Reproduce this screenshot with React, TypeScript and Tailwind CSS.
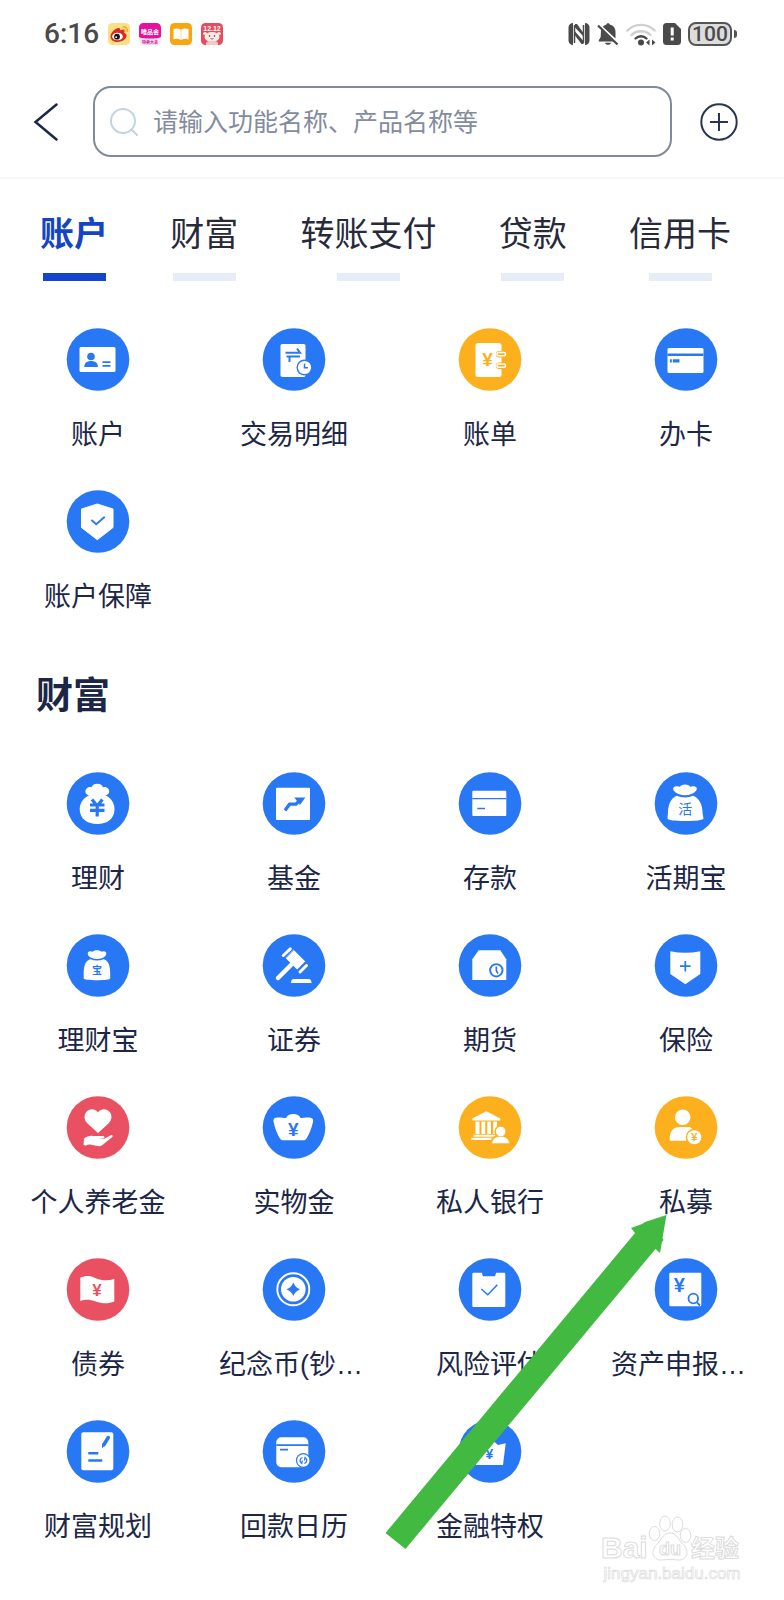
import { useState } from "react";
import type { ReactNode } from "react";
import clsx from "clsx";

const BLUE = "#2878f5";
const ORANGE = "#fdb01e";
const RED = "#e95163";

interface Entry {
  label: string;
  color: string;
  glyph: ReactNode;
}

interface YenProps {
  x: number;
  y: number;
  size: number;
  color: string;
}

function Yen({ x, y, size, color }: YenProps) {
  return (
    <text x={x} y={y} fontSize={size} fontWeight="700" textAnchor="middle" fill={color}>
      ¥
    </text>
  );
}

const accountEntries: Entry[] = [
  {
    label: "账户",
    color: BLUE,
    glyph: (
      <>
        <rect x="13.5" y="19" width="36" height="25" rx="1.5" />
        <g fill={BLUE}>
          <circle cx="25" cy="28.5" r="3.8" />
          <path d="M18.3 39c0-4 2.5-6 6.8-6s6.800 2 6.8 6z" />
          <path d="M36.5 33.2h8v1.700h-8zM36.5 37h8v1.800h-8z" />
        </g>
      </>
    ),
  },
  {
    label: "交易明细",
    color: BLUE,
    glyph: (
      <>
        <rect x="18.5" y="16" width="25" height="33" rx="1.8" />
        <path d="M23.5 24.7H38L35 20.500M38 28.500H24.500M27.500 28.500V34" fill="none" stroke={BLUE} strokeWidth="2" />
        <circle cx="42.5" cy="39.5" r="8" fill={BLUE} />
        <circle cx="42.5" cy="39.5" r="6.6" />
        <path d="M42.5 35.5v4.200h3.500" fill="none" stroke={BLUE} strokeWidth="1.5" />
      </>
    ),
  },
  {
    label: "账单",
    color: ORANGE,
    glyph: (
      <>
        <rect x="17.5" y="15" width="26" height="34" rx="2.5" />
        <Yen x={29.5} y={37.5} size={19} color={ORANGE} />
        <rect x="38" y="23" width="11" height="6.5" rx="3" fill={ORANGE} />
        <rect x="39" y="24.5" width="8.5" height="3.2" rx="1.5" fill={ORANGE} stroke="#fff" strokeWidth="1.5" />
        <rect x="38" y="34.5" width="11" height="6.5" rx="3" fill={ORANGE} />
        <rect x="39" y="36" width="8.5" height="3.2" rx="1.5" fill={ORANGE} stroke="#fff" strokeWidth="1.5" />
      </>
    ),
  },
  {
    label: "办卡",
    color: BLUE,
    glyph: (
      <>
        <rect x="13.5" y="20" width="36" height="25" rx="1.5" />
        <path d="M13.5 25.500h36v2.500h-36zM16 31.200h1.800v3.200H16zM18.800 31.200h6.700v3.200h-6.700z" fill={BLUE} />
      </>
    ),
  },
  {
    label: "账户保障",
    color: BLUE,
    glyph: (
      <>
        <path d="M31.300 14 47 19v18.500L31.300 49.700 15.500 37.500V19z" stroke="#fff" strokeLinejoin="round" />
        <path d="m26 30.500 4.200 3.800 8-7" fill="none" stroke={BLUE} strokeWidth="1.9" strokeLinecap="round" />
      </>
    ),
  },
];

const wealthEntries: Entry[] = [
  {
    label: "理财",
    color: BLUE,
    glyph: (
      <>
        <path d="M24 23.500c-4 0-6-4-3.500-7 1.400-1.700 3.400-2 5-1.200 1-2.500 3-3.600 5.800-3.600s4.800 1.100 5.800 3.600c1.600-.8 3.600-.5 5 1.200 2.500 3 .5 7-3.500 7z" />
        <path d="M25 22.500h12.500c6.500 2.500 11 7.500 11 14.500 0 10-7.500 15-17.300 15S13.700 47 13.700 37c0-7 4.800-12 11.300-14.500z" />
        <path d="M26 27.500 31.200 34l5.200-6.500M24 33h14.500M24 38.300h14.500M31.200 33v11.500" fill="none" stroke={BLUE} strokeWidth="3.2" />
      </>
    ),
  },
  {
    label: "基金",
    color: BLUE,
    glyph: (
      <>
        <rect x="14" y="15.7" width="34" height="32.3" rx="1" />
        <path d="m23 38.500 4.500-6.300h6.500l4-4" fill="none" stroke={BLUE} strokeWidth="3.2" />
        <path d="M32.300 25.500h11L38 33z" fill={BLUE} />
      </>
    ),
  },
  {
    label: "存款",
    color: BLUE,
    glyph: (
      <>
        <rect x="14.3" y="18.7" width="34" height="25.3" rx="1" />
        <path d="M14.300 26h34v1.300h-34zM19.300 35.800H27v1.500h-7.700z" fill={BLUE} />
      </>
    ),
  },
  {
    label: "活期宝",
    color: BLUE,
    glyph: (
      <>
        <path d="M24.500 22c-4.500-2-6-4.800-5-6.500 1.400-1.600 4-1.700 6.300-.8 1.200-1.400 3-2.200 5.200-2.200s4 .8 5.200 2.200c2.300-.9 4.900-.8 6.300.8 1 1.700-.5 4.500-5 6.500-4 1.600-9 1.600-13 0z" />
        <path d="M23 23.800c4.500 2.200 11.500 2.200 16 0 6.500 2.500 9.500 9 9.700 18.200l.8 4.500c0 1.700-8 2.500-18.300 2.500s-17.700-.8-17.700-2.500l.4-4.500C14 32.800 16.500 26.300 23 23.800z" />
        <text x="31.2" y="42" fontSize="14" textAnchor="middle" fill={BLUE}>活</text>
      </>
    ),
  },
  {
    label: "理财宝",
    color: BLUE,
    glyph: (
      <>
        <path d="M25.500 24c-3.300-1.500-4.500-4-3.500-5.800 1.200-1.300 2.800-1.200 4.500-.5 1-1 2.500-1.500 4.500-1.500s3.500.5 4.500 1.500c1.700-.7 3.300-.8 4.500.5 1 1.800-.2 4.300-3.500 5.800-3.500 1.300-7.500 1.300-11 0z" />
        <path d="M24.500 25.300c4 1.700 9 1.700 13 0 4.500 1 6.700 5.700 6.700 14.200v5c0 1-6 1.700-13.200 1.700s-13.300-.7-13.300-1.700v-5c0-8.500 2.300-13.200 6.800-14.200z" />
        <text x="31" y="40" fontSize="10" fontWeight="700" textAnchor="middle" fill={BLUE}>宝</text>
      </>
    ),
  },
  {
    label: "证券",
    color: BLUE,
    glyph: (
      <>
        <path d="m31.300 15.500 12 12-8 8.300-12-12z" />
        <path d="m21.300 21.500 7-6.700M38 38l6.500-6.500" stroke="#fff" strokeWidth="3" strokeLinecap="round" />
        <path d="m23 24.500 8.500-8.500M35 36.500l8.500-8.500" stroke={BLUE} strokeWidth="1" />
        <path d="M16 44 29 31" stroke="#fff" strokeWidth="4.5" strokeLinecap="round" />
        <path d="M29 49c0-2.700 1-4 3-4h14.500c2 0 3 1.300 3 4z" />
      </>
    ),
  },
  {
    label: "期货",
    color: BLUE,
    glyph: (
      <>
        <path d="M20.700 16.300h21.600l6 9V46h-34V25.300z" />
        <circle cx="38.3" cy="36.3" r="6.2" fill="none" stroke={BLUE} strokeWidth="1.9" />
        <path d="M38.300 32.500v4l1.600 3" fill="none" stroke={BLUE} strokeWidth="1.6" />
      </>
    ),
  },
  {
    label: "保险",
    color: BLUE,
    glyph: (
      <>
        <path d="M16.300 17.300q15 3 30 0V40l-15 10.300-15-10.300z" />
        <path d="M31.300 27v10.500M26 32.200h10.600" stroke={BLUE} strokeWidth="1.7" />
      </>
    ),
  },
  {
    label: "个人养老金",
    color: RED,
    glyph: (
      <>
        <path d="M32 37 21.500 27.500c-3.700-3.500-3.700-8.500-1.200-11.500 3.200-3.700 8.700-3.500 11.700.3 3-3.800 8.500-4 11.700-.3 2.500 3 2.500 8-1.200 11.500z" />
        <path d="M18 42.500c3-2.200 6-3 9-2.500h10.500c1.500.3 1.300 2-.2 2.200l-5 .3 6 .2 6.500-3.500c1.500-.5 2.500.5 1.500 1.800L38 47.700c-1.500 1.500-3 2.300-5 2.600l-8-1.600c-2-.3-3.500 0-5.500 1l-2-1z" />
      </>
    ),
  },
  {
    label: "实物金",
    color: BLUE,
    glyph: (
      <>
        <path d="M24 22c1-2.500 4-4 7.300-4s6.300 1.500 7.300 4c3-.3 7-1 10.200-.3 2 .5 2.700 2.300 2.200 4.300-1.500 6.500-3.700 12-6.500 16.500-.7 1.200-1.500 1.800-3 1.800H21c-1.500 0-2.300-.6-3-1.800-2.800-4.500-5-10-6.400-16.500-.5-2 .2-3.800 2.200-4.300 3.200-.7 7.200 0 10.200.3z" />
        <Yen x={31.3} y={39.5} size={19} color={BLUE} />
      </>
    ),
  },
  {
    label: "私人银行",
    color: ORANGE,
    glyph: (
      <>
        <path d="m28.300 15.300 14 7.200v2h-28v-2zM17.500 25.500h4V38h-4zM23.500 25.500h3.800V38h-3.800zM29.300 25.500H33V38h-3.700zM35.200 25.500h3.800V38h-3.800zM15.500 38.800h22v2h-22zM13.500 41.800h22.500V44H13.500z" />
        <circle cx="42.7" cy="35.5" r="6.3" fill={ORANGE} />
        <path d="M32 48c.5-6 4-9.500 10.500-9.500S52.500 42 53 48z" fill={ORANGE} />
        <circle cx="42.7" cy="35.5" r="4.8" />
        <path d="M34 47.300c.5-3.800 2.800-6 6-6.500h5c3.500.5 5.800 2.700 6.300 6.500z" />
      </>
    ),
  },
  {
    label: "私募",
    color: ORANGE,
    glyph: (
      <>
        <circle cx="28.7" cy="21.3" r="7.7" />
        <path d="M15.700 43c0-7.500 3.500-12 9.500-12h8c3.800 0 6.500 2 6.500 5v8.700h-23c-.7 0-1-.7-1-1.700z" />
        <circle cx="40.3" cy="41.3" r="8.500" fill={ORANGE} />
        <circle cx="40.3" cy="41.3" r="7" />
        <Yen x={40.3} y={45} size={11} color={ORANGE} />
      </>
    ),
  },
  {
    label: "债券",
    color: RED,
    glyph: (
      <>
        <path d="M14.300 19.500c5-2 9.500-2.300 14.500.2 7 3.300 13 3.300 19.500 1.300V43.500c-6 2.500-12 2.300-18.500 0-6-2-10.500-2.500-15.500-.5z" />
        <Yen x={31} y={37.5} size={17} color={RED} />
      </>
    ),
  },
  {
    label: "纪念币(钞…",
    color: BLUE,
    glyph: (
      <>
        <circle cx="31.3" cy="31.3" r="16" fill="none" stroke="#fff" strokeWidth="1.9" />
        <circle cx="31.3" cy="31.3" r="12.3" />
        <path d="M31.300 24.500q1.900 4.900 6.800 6.800-4.900 1.900-6.800 6.800-1.900-4.900-6.800-6.800 4.900-1.900 6.800-6.800z" fill={BLUE} />
      </>
    ),
  },
  {
    label: "风险评估",
    color: BLUE,
    glyph: (
      <>
        <path d="M16 14.700h7.500c1 0 .8 3.600 2 3.600h11c1.200 0 1-3.600 2-3.600H46c.8 0 1.300.5 1.300 1.300v31.500c0 1-.5 1.500-1.500 1.500h-30c-1 0-1.500-.5-1.500-1.500V16c0-.8.7-1.300 1.700-1.300z" />
        <path d="m23.300 31 6.500 5.700 9.500-10" fill="none" stroke={BLUE} strokeWidth="1.5" />
      </>
    ),
  },
  {
    label: "资产申报…",
    color: BLUE,
    glyph: (
      <>
        <rect x="15.3" y="14.7" width="32" height="33.6" rx="1" />
        <Yen x={25.3} y={34} size={20} color={BLUE} />
        <circle cx="39.3" cy="40.5" r="4.8" fill="none" stroke={BLUE} strokeWidth="1.800" />
        <path d="m43 44.500 3 3" stroke={BLUE} strokeWidth="1.800" />
      </>
    ),
  },
  {
    label: "财富规划",
    color: BLUE,
    glyph: (
      <>
        <rect x="15.3" y="12.3" width="32" height="38" rx="2" />
        <path d="M22.300 33.300h10M22.300 40.500h14" stroke={BLUE} strokeWidth="2.4" />
        <path d="M42.300 17.500 38 24.500" stroke={BLUE} strokeWidth="3.5" strokeLinecap="round" />
        <path d="m36.300 23.300 3.200 2-3.600 3z" fill={BLUE} />
      </>
    ),
  },
  {
    label: "回款日历",
    color: BLUE,
    glyph: (
      <>
        <rect x="14.3" y="17.3" width="32" height="30" rx="5" />
        <path d="M14.300 24.200h32v1.700h-32zM18 28.700h8v1.700h-8z" fill={BLUE} />
        <circle cx="41.3" cy="40.5" r="7.4" fill={BLUE} />
        <circle cx="41.3" cy="40.5" r="6.2" />
        <path d="M40.500 37.500c-3 1-3.300 4.500-.7 6l.4-3M42.300 43.500c3-1 3.300-4.500.7-6l-.4 3" fill="none" stroke={BLUE} strokeWidth="1.3" />
      </>
    ),
  },
  {
    label: "金融特权",
    color: BLUE,
    glyph: (
      <>
        <path d="M15 23.300 23 25l8.300-7.500L40 25l7.700-1.700L45 45H17.700z" />
        <Yen x={31.3} y={39} size={14} color={BLUE} />
      </>
    ),
  },
];

const tabs = ["账户", "财富", "转账支付", "贷款", "信用卡"];

function StatusBar() {
  return (
    <div className="flex h-[68px] items-center justify-between pl-11 pr-[47px] text-[#4a4a4a]">
      <div className="flex items-center gap-[9px]">
        <span className="font-[Roboto] text-[28px] font-medium leading-none">6:16</span>
        <svg className="size-[22px]" viewBox="0 0 22 22">
          <rect width="22" height="22" rx="4.500" fill="#fbdf83" />
          <path d="M2.500 13.500c0-4 5.500-9 8.500-8.500 1.500.3 1 2.300 1 2.300s4-1.500 4.500.5c.2 1-.5 2-.5 2s3 .7 2.500 3.500c-.6 3.500-5 5.700-9 5.700-4.500 0-7-2.500-7-5.500z" fill="#d92b22" />
          <ellipse cx="9.5" cy="13.5" rx="5.3" ry="3.8" fill="#fff" />
          <circle cx="9" cy="13.7" r="2.9" fill="#151515" />
          <circle cx="8.2" cy="14.2" r=".9" fill="#fff" />
          <path d="M14.500 4c3.500-.5 5.500 2 4.700 5M15 6.500c1.500-.1 2.200.8 1.900 2" fill="none" stroke="#ee9a24" strokeWidth="1.2" />
        </svg>
        <svg className="size-[22px]" viewBox="0 0 22 22">
          <rect width="22" height="22" rx="4.500" fill="#fbe3f4" />
          <path d="M0 4.500A4.500 4.500 0 0 1 4.500 0h13A4.500 4.500 0 0 1 22 4.500V14c-3 2-19 2-22 0z" fill="#e6119e" />
          <text x="11" y="11" fontSize="6" fontWeight="700" textAnchor="middle" fill="#fff">唯品会</text>
          <text x="11" y="20.5" fontSize="4" fontWeight="700" textAnchor="middle" fill="#d3128f">特卖大会</text>
        </svg>
        <svg className="size-[22px]" viewBox="0 0 22 22">
          <rect width="22" height="22" rx="4.500" fill="#f8a50f" />
          <path d="M3.500 6c2.500-1 5-.8 7.300.6V17c-2.300-1.300-4.800-1.500-7.300-.6zM18.500 6c-2.500-1-5-.8-7.300.6V17c2.300-1.300 4.800-1.500 7.300-.6z" fill="#fff" />
        </svg>
        <svg className="size-[22px]" viewBox="0 0 22 22">
          <rect width="22" height="22" rx="4.500" fill="#e84b5c" />
          <ellipse cx="11" cy="14" rx="7.5" ry="5" fill="#fbe9e6" />
          <path d="M5 20c1-3 11-3 12 0v2H5z" fill="#f6c9c4" />
          <ellipse cx="4" cy="10.5" rx="2" ry="1.5" fill="#fbe9e6" />
          <ellipse cx="18" cy="10.5" rx="2" ry="1.5" fill="#fbe9e6" />
          <circle cx="8.5" cy="13" r=".8" fill="#4a3330" />
          <circle cx="13.5" cy="13" r=".8" fill="#4a3330" />
          <path d="M9.500 15.500q1.500 1 3 0" fill="none" stroke="#4a3330" strokeWidth=".7" />
          <text x="11" y="8.2" fontSize="7" fontWeight="700" textAnchor="middle" fill="#fff">12.12</text>
        </svg>
      </div>

      <div className="flex items-center gap-[7px]">
        {/* NFC */}
        <svg className="size-[22px]" viewBox="0 0 22 22" fill="currentColor">
          <path d="M5 0v22a4.500 4.500 0 0 1-4.500-4.500v-13A4.500 4.500 0 0 1 5 0zM17 0v22a4.500 4.500 0 0 0 4.500-4.500v-13A4.500 4.500 0 0 0 17 0z" />
          <path d="M6.500 2v18M15.500 2v18" stroke="currentColor" strokeWidth="1.5" />
          <path d="M7 1h2l6.500 9v3.500L7 4.500zM7 8.500l8.500 9.500v3h-2L7 12.500z" />
        </svg>
        {/* Muted bell */}
        <svg className="size-[22px]" viewBox="0 0 22 22" fill="currentColor">
          <path d="M5.800 3.800C7 2.600 8.300 1.900 9.500 1.600 9.700.6 10.200.2 11 .2s1.500.5 1.700 1.400c3.800.8 5.800 3.700 5.800 7.400v6.500zM4 6.500 16.300 18.500H1.800v-1.500C3.300 15.500 3.800 14 3.800 12zM8 19.700h6c-.5 1.500-1.600 2.100-3 2.100s-2.500-.6-3-2.100z" />
          <path d="m1 2.500 19.500 19" stroke="currentColor" strokeWidth="2.200" />
        </svg>
        {/* Wifi */}
        <svg className="h-[23px] w-[30px]" viewBox="0 0 30 23" fill="none" strokeLinecap="round" strokeWidth="2.400">
          <path d="M1.500 7.500c7-7.500 20-7.500 27 0M5.500 12c5-5 14-5 19 0" stroke="#cfcfcf" />
          <path d="M9.500 15.500c3-3 8-3 11 0" stroke="currentColor" />
          <circle cx="15" cy="19.5" r="3" fill="currentColor" />
          <path d="m20 19.500 3.500-3v6zM29.500 19.500l-3.500-3v6z" fill="currentColor" />
        </svg>
        {/* SIM warning */}
        <svg className="h-[22px] w-[18px]" viewBox="0 0 18 22">
          <path d="M3.500 0H12l6 6v12.500a3.500 3.500 0 0 1-3.500 3.500h-11A3.500 3.500 0 0 1 0 18.500v-15A3.500 3.500 0 0 1 3.500 0z" fill="currentColor" />
          <path d="M7.700 4.500h3v8h-3zM7.700 14.500h3v3h-3z" fill="#fff" />
        </svg>
        <div className="flex items-center gap-0.5">
          <span className="flex h-6 w-11 items-center justify-center rounded-lg border-2 border-[#555] bg-[#dcdcdc] font-[Roboto] text-[21px] font-medium leading-none">
            100
          </span>
          <span className="h-2 w-[3px] rounded-r bg-[#555]" />
        </div>
      </div>
    </div>
  );
}

function EntryGrid({ entries }: { entries: Entry[] }) {
  return (
    <div className="grid grid-cols-4 gap-y-[35px]">
      {entries.map((entry) => (
        <button key={entry.label} type="button" className="flex flex-col items-center gap-[23px]">
          <svg className="size-16" viewBox="0 0 64 64" fill="#fff" aria-hidden="true">
            <circle cx="32" cy="31.5" r="31.3" fill={entry.color} />
            {entry.glyph}
          </svg>
          {/* Shortened names fill the label box from its left edge */}
          <span
            className={clsx(
              "whitespace-nowrap text-[27px] leading-10",
              entry.label.endsWith("…") && "w-[150px] text-left"
            )}
          >
            {entry.label}
          </span>
        </button>
      ))}
    </div>
  );
}

function Watermark() {
  return (
    <svg className="absolute bottom-[14px] right-10 h-[72px] w-[144px]" viewBox="0 0 144 72" fill="#fff" stroke="#dcdcdc" aria-hidden="true">
      <text x="1" y="44" fontSize="30" fontWeight="700">Bai</text>
      <ellipse cx="54.5" cy="19.5" rx="5.3" ry="7" />
      <ellipse cx="65" cy="9.500" rx="5.3" ry="7.5" />
      <ellipse cx="77.5" cy="10.5" rx="5.3" ry="7.5" />
      <ellipse cx="85.500" cy="21.5" rx="5.3" ry="7" />
      <path d="M70 19c6 0 8 5 11 9 3 3.500 6 6 6 10.500 0 5-4 8-9 7.500-5-.6-11-.6-16 0-5 .5-9-2.500-9-7.500 0-4.500 3-7 6-10.500 3-4 5-9 11-9z" />
      <text x="70" y="41" fontSize="18" fontWeight="700" textAnchor="middle">du</text>
      <text x="91" y="43" fontSize="24" fontWeight="700">经验</text>
      <text x="72" y="65" fontSize="17" strokeWidth=".7" textAnchor="middle">jingyan.baidu.com</text>
    </svg>
  );
}

export default function App() {
  const [activeTab, setActiveTab] = useState("账户");
  const [keyword, setKeyword] = useState("");

  return (
    <div className="relative min-h-screen overflow-hidden bg-white pb-[53px] font-['Liberation_Sans','Noto_Sans_CJK_SC',sans-serif] text-[#1c2747]">
      <StatusBar />

      {/* Search header */}
      <header className="flex h-[111px] items-center border-b-2 border-[#f7f7f8] pb-0.5 pl-8 pr-[46px]">
        <button type="button" aria-label="返回" className="mr-[33px]">
          <svg className="h-10 w-7" viewBox="0 0 28 40" fill="none" stroke="currentColor" strokeWidth="2.500" strokeLinecap="round">
            <path d="M24.500 2.500 3.500 20 24.500 37.500" />
          </svg>
        </button>
        <label className="flex h-[71px] min-w-0 flex-1 items-center gap-[15px] rounded-[18px] border-2 border-[#7f8a9c] px-[15px]">
          <svg className="size-7 shrink-0" viewBox="0 0 28 28" fill="none" stroke="#c3d3e3" strokeWidth="2">
            <circle cx="13" cy="13" r="12" />
            <path d="m21.500 21.500 5.500 5.500" strokeLinecap="round" />
          </svg>
          <input
            type="text"
            aria-label="搜索"
            value={keyword}
            onChange={(e) => setKeyword(e.target.value)}
            placeholder="请输入功能名称、产品名称等"
            className="min-w-0 flex-1 text-[25px] leading-9 outline-none placeholder:text-[#838b9e]"
          />
        </label>
        <button type="button" aria-label="添加" className="ml-7">
          <svg className="size-[38px]" viewBox="0 0 38 38" fill="none" stroke="#2b3552" strokeWidth="2">
            <circle cx="19" cy="19" r="17.700" />
            <path d="M19 10v18M10 19h18" />
          </svg>
        </button>
      </header>

      {/* Category tabs */}
      <nav className="flex justify-between pl-10 pr-[53px] pt-[30px]">
        {tabs.map((tab) => (
          <button
            key={tab}
            type="button"
            onClick={() => setActiveTab(tab)}
            className="flex flex-col items-center gap-[14px]"
          >
            <span
              className={clsx(
                "text-[34px] leading-[50px]",
                activeTab === tab ? "font-bold text-[#1445c4]" : "text-[#282a3a]"
              )}
            >
              {tab}
            </span>
            <span className={clsx("h-2 w-[63px]", activeTab === tab ? "bg-[#1445cf]" : "bg-[#e6ecf8]")} />
          </button>
        ))}
      </nav>

      <main>
        <section className="pt-[47px]">
          <EntryGrid entries={accountEntries} />
        </section>

        <section>
          <h2 className="mb-[51px] mt-[56px] pl-9 text-[37px] font-bold leading-[48px]">财富</h2>
          <div className="relative">
            <EntryGrid entries={wealthEntries} />
            {/* Arrow pointing at 私募 */}
            <svg className="pointer-events-none absolute left-[385px] top-[443px] h-[335px] w-[282px]" viewBox="0 0 282 335" fill="#42ba42">
              <path d="M281.500 0 277.500 23l1 2-1.500 2-2 11-4.500-4L20.500 334 .5 318 250 18l-4-5 11-4 3-2z" />
            </svg>
          </div>
        </section>
      </main>

      <Watermark />
    </div>
  );
}
